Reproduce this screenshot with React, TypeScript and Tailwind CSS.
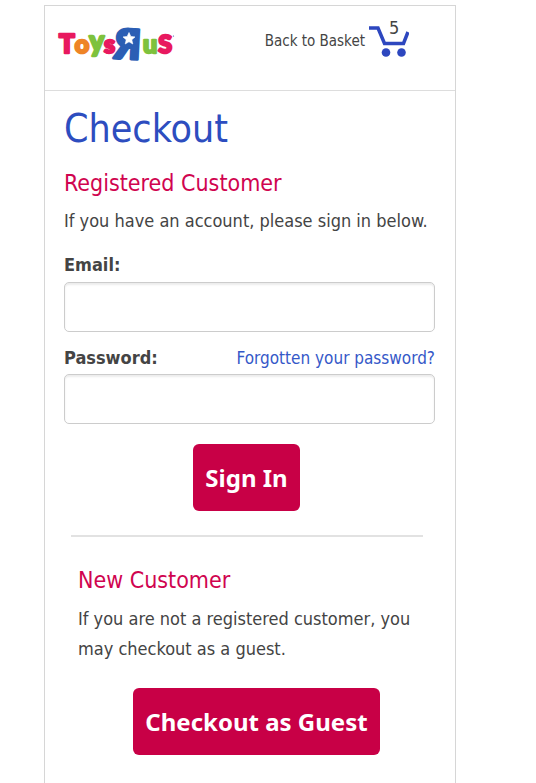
import React from 'react';

function Logo() {
  return (
    <svg
      role="img"
      aria-label="ToysRus"
      width="118"
      height="38"
      viewBox="0 0 118 38"
      fontFamily="Lato, sans-serif"
      fontWeight="900"
      strokeLinejoin="round"
      strokeWidth="2.400"
    >
      <g transform="rotate(3 72 18)">
        <text x="-84" y="33" fontSize="41" strokeWidth="3" fill="#2b5eb4" stroke="#2b5eb4" transform="scale(-1 1)">
          R
        </text>
      </g>
      <circle cx="71" cy="12.500" r="9.500" fill="#2b5eb4" />
      <path
        d="M72 6.500l1.800 3.900 4.200.5-3.200 2.900 1 4.200-3.800-2.200-3.800 2.200 1-4.200-3.200-2.900 4.200-.5z"
        fill="#fff"
        stroke="#fff"
        strokeWidth=".6"
      />
      <text x="2" y="27" fontSize="26">
        <tspan fill="#e8195f" stroke="#e8195f">T</tspan>
        <tspan fill="#ee8426" stroke="#ee8426" fontSize="25">o</tspan>
        <tspan fill="#7ec23d" stroke="#7ec23d" fontSize="28" dy="-2">y</tspan>
        <tspan fill="#e8195f" stroke="#e8195f" fontSize="25" dy="2">s</tspan>
      </text>
      <text x="86" y="27" fontSize="25">
        <tspan fill="#7ec23d" stroke="#7ec23d">u</tspan>
        <tspan fill="#e8195f" stroke="#e8195f" dx="1">S</tspan>
      </text>
      <circle cx="116.500" cy="10" r=".6" fill="#2b5eb4" />
    </svg>
  );
}

function Cart() {
  return (
    <svg width="40" height="34" viewBox="0 0 40 34" fill="none" aria-hidden="true">
      <path d="M0 2h9l6.500 15.500h19l4.500-11.500" stroke="#2d47bf" strokeWidth="3.500" />
      <circle cx="17" cy="26.500" r="4.300" fill="#2d47bf" />
      <circle cx="32.500" cy="26.500" r="4.300" fill="#2d47bf" />
    </svg>
  );
}

export default function App() {
  const field =
    'block h-[50px] w-full rounded-[5px] border border-[#cccccc] bg-white px-3 text-lg shadow-[inset_0_2px_2px_rgba(0,0,0,0.08)]';
  const button =
    "h-[67px] rounded-md bg-[#c80046] px-3 font-['Noto_Sans',sans-serif] text-2xl font-bold text-white";

  return (
    <div className="min-h-screen bg-white pt-[5px] pr-20 pl-11 font-['DejaVu_Sans_Condensed','Noto_Sans',sans-serif] text-[#444444]">
      <div className="border border-b-0 border-[#d6d6d6]">
        <header className="flex h-[85px] items-start justify-between border-b border-[#dddddd] pt-5 pr-[46px] pl-3">
          <a href="#home">
            <Logo />
          </a>
          <a href="#basket" className="flex items-start gap-1 text-[15px] leading-[30px]">
            Back to Basket
            <span className="relative">
              <Cart />
              <span className="absolute -top-2 left-5 text-lg leading-5">5</span>
            </span>
          </a>
        </header>

        <main className="pr-5 pb-7 pl-[19px]">
          <h1 className="pt-3 text-[39px] leading-[52px] text-[#2d4dbf]">Checkout</h1>

          <form onSubmit={(e) => e.preventDefault()}>
            <h2 className="pt-3 text-[23px] leading-8 text-[#d0044f]">Registered Customer</h2>
            <p className="pt-2 text-lg leading-7">If you have an account, please sign in below.</p>

            <label htmlFor="email" className="block pt-4 pb-[3px] text-lg leading-7 font-bold">
              Email:
            </label>
            <input id="email" type="email" className={field} />

            <div className="flex items-center justify-between pt-3 pb-0.5">
              <label htmlFor="password" className="text-lg leading-7 font-bold">
                Password:
              </label>
              <a href="#forgotten" className="text-[17px] leading-7 text-[#3558c8]">
                Forgotten your password?
              </a>
            </div>
            <input id="password" type="password" className={field} />

            <div className="flex justify-center pt-5 pr-1.5">
              <button type="submit" className={button}>
                Sign In
              </button>
            </div>
          </form>

          <hr className="mt-6 mr-3 ml-[7px] border-t-2 border-[#e2e2e2]" />

          <section className="pt-[27px] pl-3.5">
            <h2 className="text-[23px] leading-8 text-[#d0044f]">New Customer</h2>
            <p className="pt-2 text-lg leading-[30px]">
              If you are not a registered customer, you may checkout as a guest.
            </p>
            <div className="flex justify-center pt-6">
              <button type="button" className={button}>
                Checkout as Guest
              </button>
            </div>
          </section>
        </main>
      </div>
    </div>
  );
}
